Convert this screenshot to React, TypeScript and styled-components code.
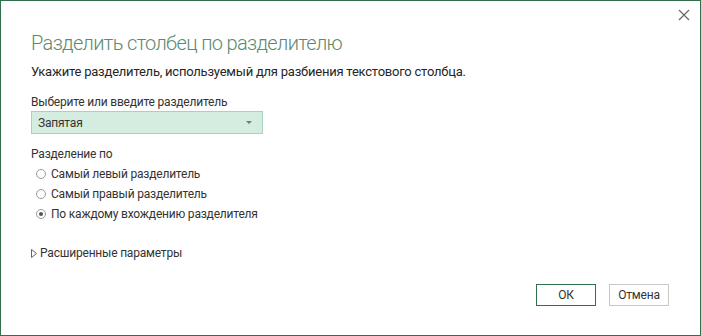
import React from "react";
import styled, { createGlobalStyle } from "styled-components";

const Global = createGlobalStyle`
  html, body { margin: 0; padding: 0; background: #ffffff; }
  body { font-family: Roboto, "Open Sans", sans-serif; }
  * { box-sizing: border-box; }
`;

const Window = styled.div`
  position: relative;
  width: 701px;
  height: 336px;
  border: 1px solid #2f6f4c;
  background: #fff;
  display: flex;
  flex-direction: column;
  padding: 29px 31px 0 30px;
`;

const Close = styled.button`
  position: absolute;
  top: 7px;
  right: 10px;
  width: 13px;
  height: 13px;
  border: none;
  background: transparent;
  padding: 0;
  display: flex;
  align-items: center;
  justify-content: center;
`;

const Title = styled.h1`
  margin: 0;
  font-family: Roboto, "Open Sans", sans-serif;
  font-weight: 300;
  font-size: 20px;
  letter-spacing: -0.65px;
  line-height: 26px;
  color: #5b8a71;
`;

const Subtitle = styled.p`
  margin: 7px 0 0;
  font-size: 13px;
  letter-spacing: -0.22px;
  line-height: 18px;
  color: #262626;
`;

const Label = styled.div<{ $mt: number }>`
  margin-top: ${(p) => p.$mt}px;
  font-size: 12px;
  letter-spacing: -0.2px;
  line-height: 16px;
  color: #333;
`;

const Select = styled.div`
  margin-top: 1px;
  width: 232px;
  height: 23px;
  background: #d5ede0;
  border: 1px solid #a8d2ba;
  display: flex;
  align-items: center;
  justify-content: space-between;
  padding: 0 10px 0 6px;
  font-size: 12px;
  letter-spacing: -0.2px;
  color: #333;
`;

const Caret = styled.span`
  width: 0;
  height: 0;
  border-left: 3px solid transparent;
  border-right: 3px solid transparent;
  border-top: 3px solid #777;
`;

const RadioList = styled.div`
  display: flex;
  flex-direction: column;
  gap: 4px;
  margin-top: 4px;
  padding-left: 5px;
`;

const RadioRow = styled.label`
  display: flex;
  align-items: center;
  gap: 5px;
  height: 16px;
  font-size: 12px;
  letter-spacing: -0.2px;
  color: #333;
`;

const RadioDot = styled.span<{ $on?: boolean }>`
  width: 10px;
  height: 10px;
  border-radius: 50%;
  border: 1px solid #999;
  background: #fff;
  display: flex;
  align-items: center;
  justify-content: center;
  &::after {
    content: "";
    width: 4px;
    height: 4px;
    border-radius: 50%;
    background: ${(p) => (p.$on ? "#555" : "transparent")};
  }
`;

const Advanced = styled.div`
  margin-top: 23px;
  height: 16px;
  display: flex;
  align-items: center;
  gap: 3px;
  font-size: 12px;
  letter-spacing: -0.2px;
  color: #333;
`;

const Footer = styled.div`
  margin-top: auto;
  margin-bottom: 29px;
  display: flex;
  justify-content: flex-end;
  gap: 13px;
`;

const Button = styled.button<{ $primary?: boolean }>`
  width: 60px;
  height: 22px;
  background: #fff;
  border: 1px solid ${(p) => (p.$primary ? "#2f6f4c" : "#c8c8c8")};
  font-family: Roboto, "Open Sans", sans-serif;
  font-size: 12px;
  letter-spacing: -0.2px;
  color: #333;
  padding: 0;
`;

export default function App() {
  return (
    <>
      <Global />
      <Window>
        <Close aria-label="close">
          <svg width="12" height="12" viewBox="0 0 12 12">
            <path d="M1 1L11 11M11 1L1 11" stroke="#666" strokeWidth="1.2" />
          </svg>
        </Close>
        <Title>Разделить столбец по разделителю</Title>
        <Subtitle>Укажите разделитель, используемый для разбиения текстового столбца.</Subtitle>
        <Label $mt={13}>Выберите или введите разделитель</Label>
        <Select>
          <span>Запятая</span>
          <Caret />
        </Select>
        <Label $mt={12}>Разделение по</Label>
        <RadioList>
          <RadioRow><RadioDot />Самый левый разделитель</RadioRow>
          <RadioRow><RadioDot />Самый правый разделитель</RadioRow>
          <RadioRow><RadioDot $on />По каждому вхождению разделителя</RadioRow>
        </RadioList>
        <Advanced>
          <svg width="6" height="9" viewBox="0 0 6 9">
            <path d="M0.5 0.5L5.5 4.5L0.5 8.5Z" fill="none" stroke="#666" strokeWidth="1" />
          </svg>
          Расширенные параметры
        </Advanced>
        <Footer>
          <Button $primary>ОК</Button>
          <Button>Отмена</Button>
        </Footer>
      </Window>
    </>
  );
}
